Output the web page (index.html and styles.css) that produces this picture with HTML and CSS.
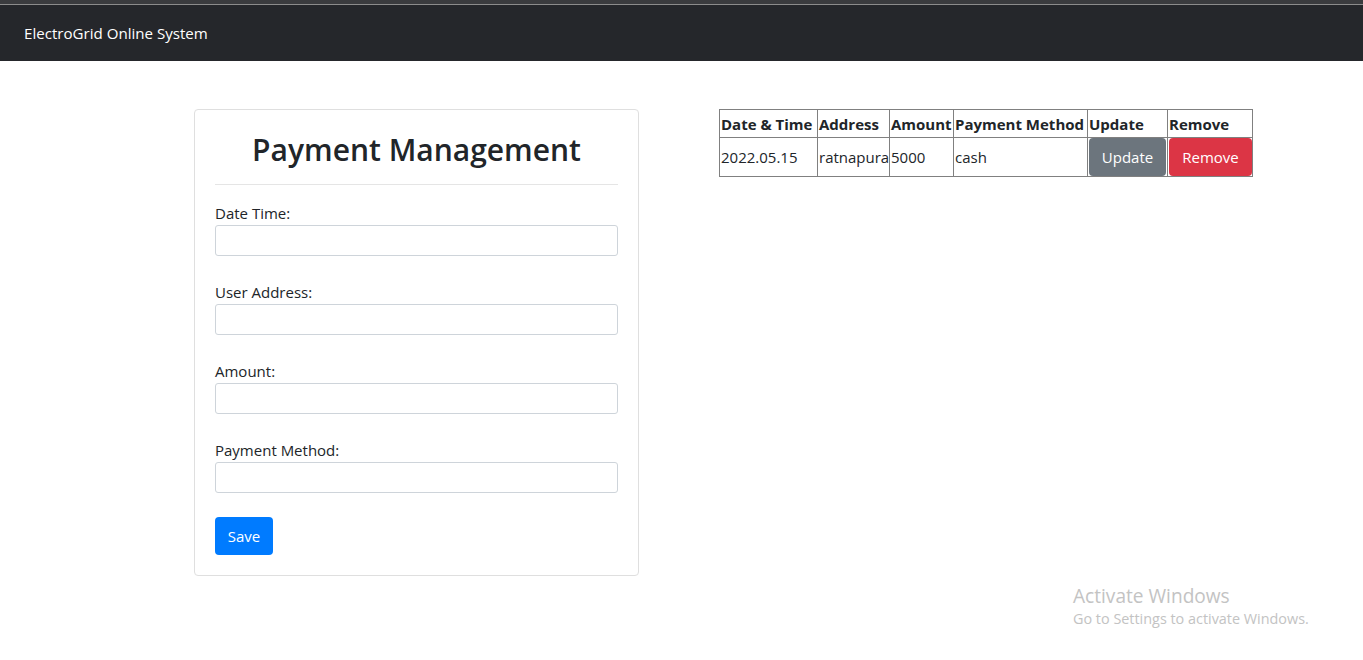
FILE: index.html
```html
<!DOCTYPE html>
<html>
<head>
<meta charset="utf-8">
<link rel="stylesheet" href="styles.css">
</head>
<body>
<nav class="navbar"><span class="brand">ElectroGrid Online System</span></nav>
<main class="page">
  <section class="card">
    <h1 class="title">Payment Management</h1>
    <hr class="rule">
    <form class="form">
      <label class="label">Date Time:</label>
      <input class="input" type="text">
      <label class="label">User Address:</label>
      <input class="input" type="text">
      <label class="label">Amount:</label>
      <input class="input" type="text">
      <label class="label">Payment Method:</label>
      <input class="input" type="text">
      <button class="btn btn-primary" type="button">Save</button>
    </form>
  </section>
  <section class="table-wrap">
    <table class="grid">
      <thead>
        <tr>
          <th class="c1">Date &amp; Time</th>
          <th class="c2">Address</th>
          <th class="c3">Amount</th>
          <th class="c4">Payment Method</th>
          <th class="c5">Update</th>
          <th class="c6">Remove</th>
        </tr>
      </thead>
      <tbody>
        <tr>
          <td>2022.05.15</td>
          <td>ratnapura</td>
          <td>5000</td>
          <td>cash</td>
          <td><button class="btn btn-secondary" type="button">Update</button></td>
          <td><button class="btn btn-danger" type="button">Remove</button></td>
        </tr>
      </tbody>
    </table>
  </section>
</main>
<div class="watermark">
  <div class="wm-title">Activate Windows</div>
  <div class="wm-sub">Go to Settings to activate Windows.</div>
</div>
</body>
</html>
```

FILE: styles.css
```css
* { box-sizing: border-box; }
html, body { margin: 0; padding: 0; }
body {
  font-family: "Open Sans", "Noto Sans", sans-serif;
  font-size: 15px;
  color: #212529;
  background: #fff;
  width: 1363px;
  height: 660px;
  overflow: hidden;
  position: relative;
}
.navbar {
  height: 61px;
  background: linear-gradient(#3a3b3e 0 4px, #8c8c8c 4px 5px, #25272b 5px);
  display: flex;
  align-items: center;
  padding: 0 24px;
}
.brand {
  color: #fff;
  font-size: 15.1px;
  padding-top: 5px;
}
.page {
  display: flex;
  align-items: flex-start;
  padding: 48px 0 0 194px;
  gap: 80px;
}
.card {
  width: 445px;
  border: 1px solid #dfdfdf;
  border-radius: 4px;
  padding: 19px 20px 20px;
}
.title {
  margin: 0;
  text-align: center;
  font-weight: 600;
  font-size: 30px;
  line-height: 41px;
  height: 55px;
}
.rule {
  margin: 0 0 16px;
  border: 0;
  border-top: 1px solid #e5e5e5;
}
.form { display: flex; flex-direction: column; }
.label {
  line-height: 24px;
  height: 24px;
}
.input {
  height: 31px;
  border: 1px solid #ced4da;
  border-radius: 3px;
  margin: 0 0 24px;
  font: inherit;
}
.btn {
  font-family: inherit;
  font-size: 15px;
  line-height: 24px;
  border: 1px solid transparent;
  border-radius: 4px;
  color: #fff;
  height: 38px;
  padding: 6px 0;
  cursor: pointer;
}
.btn-primary { background: #007bff; align-self: flex-start; width: 58px; }
.btn-secondary { background: #6c757d; width: 77px; }
.btn-danger { background: #dc3545; width: 83px; }
.grid {
  border-collapse: collapse;
  table-layout: fixed;
  width: 533px;
  font-size: 15px;
}
.grid th, .grid td {
  border: 1px solid #808080;
  padding: 1px;
  text-align: left;
  white-space: nowrap;
  overflow: visible;
}
.grid th { font-weight: 700; height: 28px; }
.grid td { height: 39px; padding: 0 1px; }
.c1 { width: 98px; }
.c2 { width: 72px; }
.c3 { width: 64px; }
.c4 { width: 134px; }
.c5 { width: 80px; }
.c6 { width: 85px; }
.watermark {
  position: absolute;
  left: 1073px;
  top: 584px;
  color: #c3c3c3;
}
.wm-title { font-size: 19.1px; line-height: 24px; }
.wm-sub { font-size: 14.4px; line-height: 22px; }
```
